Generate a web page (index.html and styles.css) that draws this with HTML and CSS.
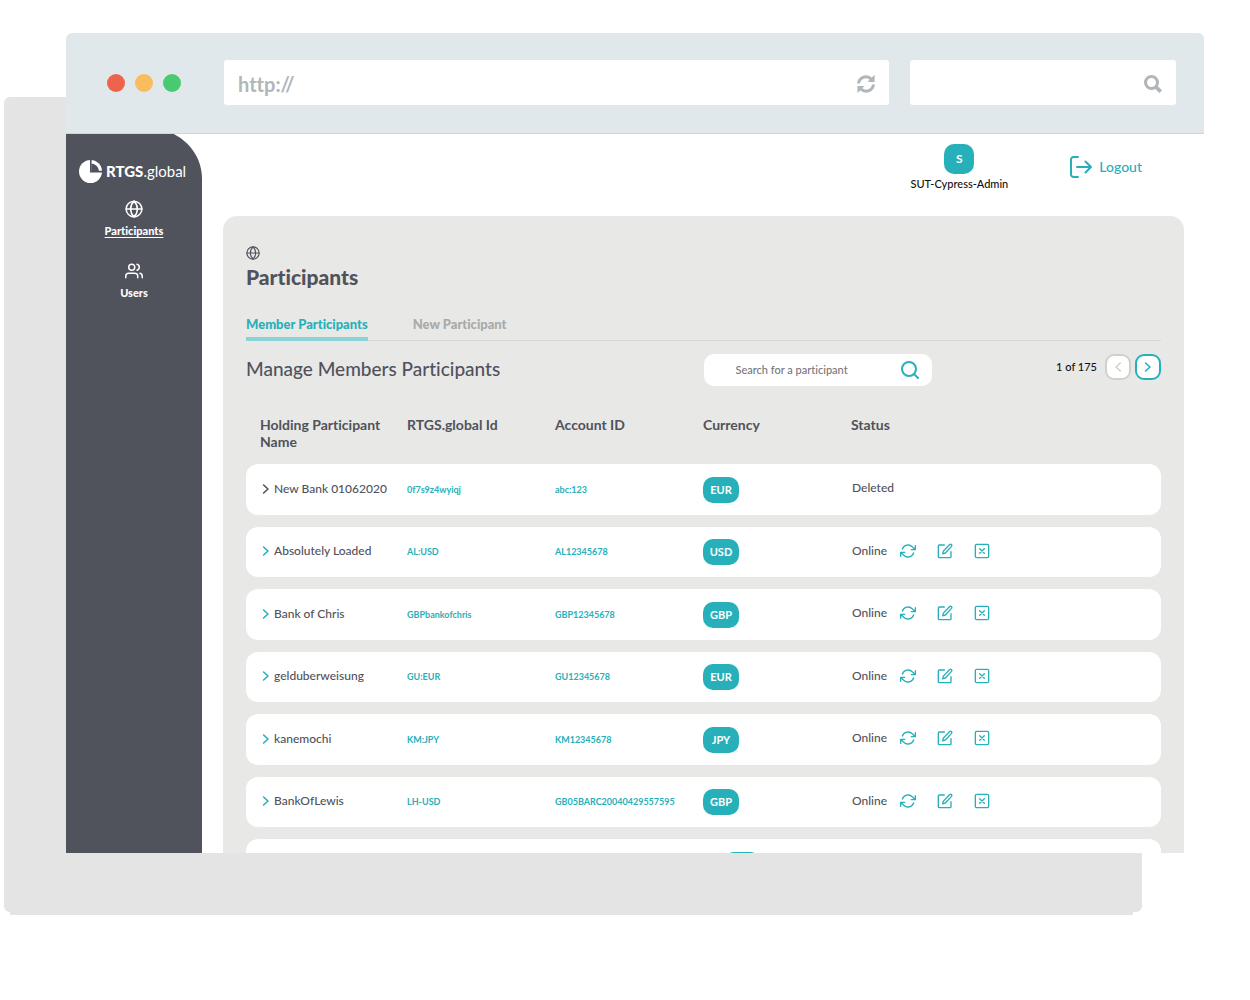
FILE: index.html
```html
<!DOCTYPE html>
<html lang="en">
<head>
<meta charset="utf-8">
<meta name="viewport" content="width=device-width, initial-scale=1">
<title>RTGS.global – Participants</title>
<link rel="stylesheet" href="styles.css">
</head>
<body>
<svg class="sprite" aria-hidden="true">
  <symbol id="globe" viewBox="0 0 24 24"><circle cx="12" cy="12" r="10.500"/><path d="M1.500 12h21M12 1.500c6 6 6 15 0 21c-6-6-6-15 0-21z"/></symbol>
  <symbol id="users" viewBox="0 0 24 24"><path d="M17 21v-2a4 4 0 0 0-4-4H5a4 4 0 0 0-4 4v2M23 21v-2a4 4 0 0 0-3-3.870M16 3.130a4 4 0 0 1 0 7.750"/><circle cx="9" cy="7" r="4"/></symbol>
  <symbol id="refresh" viewBox="0 0 24 24"><path d="M23 4v6h-6M1 20v-6h6M3.510 9a9 9 0 0 1 14.850-3.360L23 10M1 14l4.640 4.360A9 9 0 0 0 20.490 15"/></symbol>
  <symbol id="edit" viewBox="0 0 24 24"><path d="M11 3H3.500A1.500 1.500 0 0 0 2 4.500v16A1.500 1.500 0 0 0 3.500 22h16a1.500 1.500 0 0 0 1.500-1.500V13"/><path d="M19 2.200a2 2 0 0 1 2.800 2.800L12.500 15l-4 1.200 1-4z"/></symbol>
  <symbol id="remove" viewBox="0 0 24 24"><rect x="2" y="2" width="20" height="20" rx="2"/><path d="M8.500 8.500l7 7M15.500 8.500l-7 7"/></symbol>
  <symbol id="right" viewBox="0 0 10 14"><path d="M2 2l5.500 5L2 12"/></symbol>
  <symbol id="left" viewBox="0 0 10 14"><path d="M8 2L2.500 7L8 12"/></symbol>
</svg>

<div class="window">
  <header class="chrome">
    <div class="dots"><span class="dot red"></span><span class="dot amber"></span><span class="dot green"></span></div>
    <div class="field">
      <input type="text" value="http://" aria-label="Address">
      <svg class="i18" viewBox="0 0 18 18" fill="#b0b6b9"><path d="M0 8.500A9 9 0 0 1 14.700 2.400L17.600 0V7H10.600L12.700 4.700A6 6 0 0 0 3 8.500z"/><path d="M18 9.500A9 9 0 0 1 3.300 15.600L.4 18V11H7.400L5.300 13.300A6 6 0 0 0 15 9.500z"/></svg>
    </div>
    <div class="field">
      <input type="text" aria-label="Web search">
      <svg class="i18" viewBox="0 0 18 18" fill="none" stroke="#b0b6b9"><circle cx="7.500" cy="7.500" r="6" stroke-width="3"/><path d="M11.800 11.800L16.700 16.700" stroke-width="3.800"/></svg>
    </div>
  </header>

  <div class="app">
    <aside class="sidebar">
      <div class="logo">
        <svg class="logo-mark" viewBox="0 0 23 23"><circle cx="11.500" cy="11.500" r="11.500" fill="#fff"/><path d="M11.800 0V11.600H23" fill="none" stroke="#50525c" stroke-width="1.600"/><path d="M12.400 3.400A8.600 8.600 0 0 1 20 11H12.400z" fill="#50525c"/></svg>
        <span><b>RTGS</b>.global</span>
      </div>
      <nav>
        <a class="nav-item current" href="#participants"><svg class="i18 icon"><use href="#globe"/></svg>Participants</a>
        <a class="nav-item" href="#users"><svg class="i18 icon"><use href="#users"/></svg>Users</a>
      </nav>
    </aside>

    <div class="content">
      <div class="topbar">
        <div class="user"><span class="avatar">S</span>SUT-Cypress-Admin</div>
        <button class="logout" type="button"><svg class="i22 icon" viewBox="0 0 22 22"><path d="M8 1H3.500A2.500 2.500 0 0 0 1 3.500v15A2.500 2.500 0 0 0 3.500 21H8M7 11h14M15.500 5.500L21 11l-5.500 5.500"/></svg>Logout</button>
      </div>

      <main class="panel">
        <svg class="i14 icon"><use href="#globe"/></svg>
        <h1>Participants</h1>
        <div class="tabs" role="tablist">
          <button class="tab active" type="button" role="tab" aria-selected="true">Member Participants</button>
          <button class="tab" type="button" role="tab" aria-selected="false">New Participant</button>
        </div>

        <div class="toolbar">
          <h2>Manage Members Participants</h2>
          <div class="search">
            <input type="text" placeholder="Search for a participant" aria-label="Search for a participant">
            <svg class="i18 icon" viewBox="0 0 18 18"><circle cx="8" cy="8" r="7"/><path d="M13 13l4 4"/></svg>
          </div>
          <div class="pager">
            <span>1 of 175</span>
            <button class="page" type="button" aria-label="Previous page" disabled><svg class="chevron icon"><use href="#left"/></svg></button>
            <button class="page" type="button" aria-label="Next page"><svg class="chevron icon"><use href="#right"/></svg></button>
          </div>
        </div>

        <table>
          <colgroup><col class="c-name"><col class="c-data"><col class="c-data"><col class="c-data"><col></colgroup>
          <thead>
            <tr><th scope="col">Holding Participant Name</th><th scope="col">RTGS.global Id</th><th scope="col">Account ID</th><th scope="col">Currency</th><th scope="col">Status</th></tr>
          </thead>
          <tbody>
            <tr>
              <td><button class="name muted" type="button"><svg class="chevron icon"><use href="#right"/></svg><span>New Bank 01062020</span></button></td>
              <td class="id">0f7s9z4wyiqj</td><td class="id">abc:123</td><td><span class="badge">EUR</span></td>
              <td><div class="status">Deleted</div></td>
            </tr>
            <tr>
              <td><button class="name" type="button"><svg class="chevron icon"><use href="#right"/></svg><span>Absolutely Loaded</span></button></td>
              <td class="id">AL:USD</td><td class="id">AL12345678</td><td><span class="badge">USD</span></td>
              <td><div class="status"><span class="state">Online</span><button type="button" aria-label="Refresh"><svg class="i16 icon"><use href="#refresh"/></svg></button><button type="button" aria-label="Edit"><svg class="i16 icon"><use href="#edit"/></svg></button><button type="button" aria-label="Remove"><svg class="i16 icon"><use href="#remove"/></svg></button></div></td>
            </tr>
            <tr>
              <td><button class="name" type="button"><svg class="chevron icon"><use href="#right"/></svg><span>Bank of Chris</span></button></td>
              <td class="id">GBPbankofchris</td><td class="id">GBP12345678</td><td><span class="badge">GBP</span></td>
              <td><div class="status"><span class="state">Online</span><button type="button" aria-label="Refresh"><svg class="i16 icon"><use href="#refresh"/></svg></button><button type="button" aria-label="Edit"><svg class="i16 icon"><use href="#edit"/></svg></button><button type="button" aria-label="Remove"><svg class="i16 icon"><use href="#remove"/></svg></button></div></td>
            </tr>
            <tr>
              <td><button class="name" type="button"><svg class="chevron icon"><use href="#right"/></svg><span>gelduberweisung</span></button></td>
              <td class="id">GU:EUR</td><td class="id">GU12345678</td><td><span class="badge">EUR</span></td>
              <td><div class="status"><span class="state">Online</span><button type="button" aria-label="Refresh"><svg class="i16 icon"><use href="#refresh"/></svg></button><button type="button" aria-label="Edit"><svg class="i16 icon"><use href="#edit"/></svg></button><button type="button" aria-label="Remove"><svg class="i16 icon"><use href="#remove"/></svg></button></div></td>
            </tr>
            <tr>
              <td><button class="name" type="button"><svg class="chevron icon"><use href="#right"/></svg><span>kanemochi</span></button></td>
              <td class="id">KM:JPY</td><td class="id">KM12345678</td><td><span class="badge">JPY</span></td>
              <td><div class="status"><span class="state">Online</span><button type="button" aria-label="Refresh"><svg class="i16 icon"><use href="#refresh"/></svg></button><button type="button" aria-label="Edit"><svg class="i16 icon"><use href="#edit"/></svg></button><button type="button" aria-label="Remove"><svg class="i16 icon"><use href="#remove"/></svg></button></div></td>
            </tr>
            <tr>
              <td><button class="name" type="button"><svg class="chevron icon"><use href="#right"/></svg><span>BankOfLewis</span></button></td>
              <td class="id">LH-USD</td><td class="id">GB05BARC20040429557595</td><td><span class="badge">GBP</span></td>
              <td><div class="status"><span class="state">Online</span><button type="button" aria-label="Refresh"><svg class="i16 icon"><use href="#refresh"/></svg></button><button type="button" aria-label="Edit"><svg class="i16 icon"><use href="#edit"/></svg></button><button type="button" aria-label="Remove"><svg class="i16 icon"><use href="#remove"/></svg></button></div></td>
            </tr>
            <tr>
              <td></td><td></td><td></td><td class="shifted"><span class="badge"></span></td><td></td>
            </tr>
          </tbody>
        </table>
      </main>
    </div>
  </div>
</div>
</body>
</html>
```
FILE: styles.css
```css
:root {
  --teal: #27b0b9;
  --ink: #50525c;
  --panel: #e8e8e6;
}

* { box-sizing: border-box; }

body {
  min-height: 100vh;
  margin: 0;
  padding: 33px 46px 62px 66px;
  background: #fff;
  color: var(--ink);
  font: 500 12px/16px Lato, "Open Sans", sans-serif;
  font-variant-ligatures: none;
}

button, input {
  font: inherit;
  font-variant-ligatures: none;
  color: inherit;
  border: 0;
  padding: 0;
  background: none;
}

input { min-width: 0; flex: 1; outline: 0; }

.sprite { display: none; }

.icon {
  fill: none;
  stroke: currentColor;
  stroke-width: 2;
  stroke-linecap: round;
  stroke-linejoin: round;
}

svg { display: block; flex: none; }
.i14 { width: 14px; height: 14px; }
.i16 { width: 16px; height: 16px; }
.i18 { width: 18px; height: 18px; }
.i22 { width: 22px; height: 22px; }
.chevron { width: 8px; height: 12px; }

/* Browser window with its flat offset shadow */
.window {
  position: relative;
  z-index: 0;
  display: flex;
  flex-direction: column;
  height: 82vh;
}

.window::before,
.window::after {
  content: "";
  position: absolute;
  z-index: -1;
  background: #e4e4e4;
}

.window::before { inset: 64px 62px -59px -62px; border-radius: 6px; }
.window::after { inset: auto 71px -62px -56px; height: 12px; }

.chrome {
  display: grid;
  grid-template-columns: auto 5fr 2fr;
  align-items: center;
  gap: 21px;
  height: 101px;
  flex: none;
  padding: 0 28px 1px 41px;
  background: #e0e8eb;
  border-bottom: 1px solid #d0d4d8;
  border-radius: 6px 6px 0 0;
}

.dots { display: flex; gap: 10px; margin-right: 22px; }
.dot { width: 18px; height: 18px; border-radius: 50%; }
.red { background: #ee634c; }
.amber { background: #f9bd5e; }
.green { background: #48cb70; }

.field {
  display: flex;
  align-items: center;
  min-width: 0;
  height: 45px;
  padding: 2px 14px 0;
  background: #fff;
  border-radius: 3px;
  color: #b0b6b9;
  font-size: 20px;
  font-weight: 700;
}

.app {
  display: flex;
  flex: 1;
  min-height: 0;
  overflow: hidden;
  background: #fff;
}

.sidebar {
  width: 136px;
  flex: none;
  margin-top: -5px;
  padding-top: 31px;
  background: var(--ink);
  border-top-right-radius: 50px;
  color: #fff;
}

.logo {
  display: flex;
  align-items: center;
  gap: 4px;
  padding-left: 13px;
  font-size: 15px;
  line-height: 23px;
  font-weight: 400;
}

.logo b { font-weight: 900; }
.logo-mark { width: 23px; height: 23px; }

.nav-item {
  display: flex;
  flex-direction: column;
  align-items: center;
  gap: 5px;
  margin-bottom: 23px;
  color: #fff;
  font-size: 11px;
  font-weight: 900;
  text-decoration: none;
}

nav { padding-top: 17px; }
.current { text-decoration: underline; text-underline-offset: 2px; }

.content {
  display: flex;
  flex-direction: column;
  flex: 1;
  min-width: 0;
  padding: 0 20px 0 21px;
}

.topbar {
  display: flex;
  justify-content: flex-end;
  gap: 62px;
  flex: none;
  height: 82px;
  padding: 10px 42px 0 0;
}

.user {
  display: flex;
  flex-direction: column;
  align-items: center;
  gap: 2px;
  color: #111;
  font-size: 11px;
}

.avatar, .badge {
  display: flex;
  align-items: center;
  justify-content: center;
  background: var(--teal);
  border-radius: 10px;
  color: #fff;
}

.avatar { width: 30px; height: 30px; font-size: 12px; font-weight: 700; }

.logout {
  display: flex;
  align-items: center;
  gap: 7px;
  height: 22px;
  margin-top: 12px;
  color: var(--teal);
  font-size: 14px;
}

.panel {
  flex: none;
  padding: 30px 23px;
  background: var(--panel);
  border-radius: 14px 14px 0 0;
}

h1, h2 { margin: 0; color: var(--ink); }
h1 { margin-top: 5px; font-size: 21px; line-height: 24px; font-weight: 900; }
h2 { font-size: 19px; line-height: 30px; font-weight: 500; }

.tabs {
  display: flex;
  gap: 45px;
  margin-top: 26px;
  border-bottom: 1px solid #d8d8d8;
}

.tab {
  height: 26px;
  margin-bottom: -1px;
  padding-bottom: 4px;
  border-bottom: 4px solid transparent;
  color: #a9aaa9;
  font-size: 13px;
  font-weight: 900;
}

.active { color: var(--teal); border-color: #8ad2d7; }

.toolbar {
  display: grid;
  grid-template-columns: 2fr 1fr 1fr;
  margin-top: 13px;
}

.search {
  display: flex;
  align-items: center;
  height: 32px;
  padding: 0 13px 0 32px;
  background: #fff;
  border-radius: 10px;
  color: var(--teal);
  font-size: 11px;
}

.search input::placeholder { color: #777; opacity: 1; }

.pager {
  display: flex;
  align-items: center;
  justify-content: flex-end;
  gap: 4px;
  height: 26px;
  color: #111;
  font-size: 11px;
}

.pager span { margin-right: 4px; }

.page {
  display: flex;
  align-items: center;
  justify-content: center;
  width: 26px;
  height: 26px;
  border: 2px solid var(--teal);
  border-radius: 9px;
  background: #fff;
  color: var(--teal);
}

.page:disabled { border-color: #d0d0ce; color: #d0d0ce; }

table {
  width: 100%;
  margin-top: 18px;
  table-layout: fixed;
  border-collapse: separate;
  border-spacing: 0 12px;
}

.c-name { width: 160px; }
.c-data { width: 148px; }

th {
  padding: 0 0 0 1px;
  height: 36px;
  text-align: left;
  vertical-align: top;
  font-size: 14px;
  line-height: 17px;
  font-weight: 700;
}

th:first-child { padding-left: 14px; padding-right: 16px; }

td { height: 50px; padding: 0 0 0 1px; background: #fff; }
tr:nth-child(odd) td { height: 51px; }
td:first-child { padding-left: 16px; border-radius: 12px 0 0 12px; }
td:last-child { padding-left: 2px; border-radius: 0 12px 12px 0; }

.name {
  display: flex;
  align-items: center;
  gap: 4px;
  padding-bottom: 2px;
  color: var(--teal);
  white-space: nowrap;
}

.name span, .muted { color: var(--ink); }

.id { color: var(--teal); font-size: 9px; font-weight: 700; }
.badge { width: 36px; height: 26px; font-size: 11px; font-weight: 700; }
td.shifted { padding-left: 22px; }

.status { display: flex; align-items: center; gap: 21px; padding-bottom: 3px; }
.status button { color: var(--teal); }
.state { width: 27px; white-space: nowrap; }
```
